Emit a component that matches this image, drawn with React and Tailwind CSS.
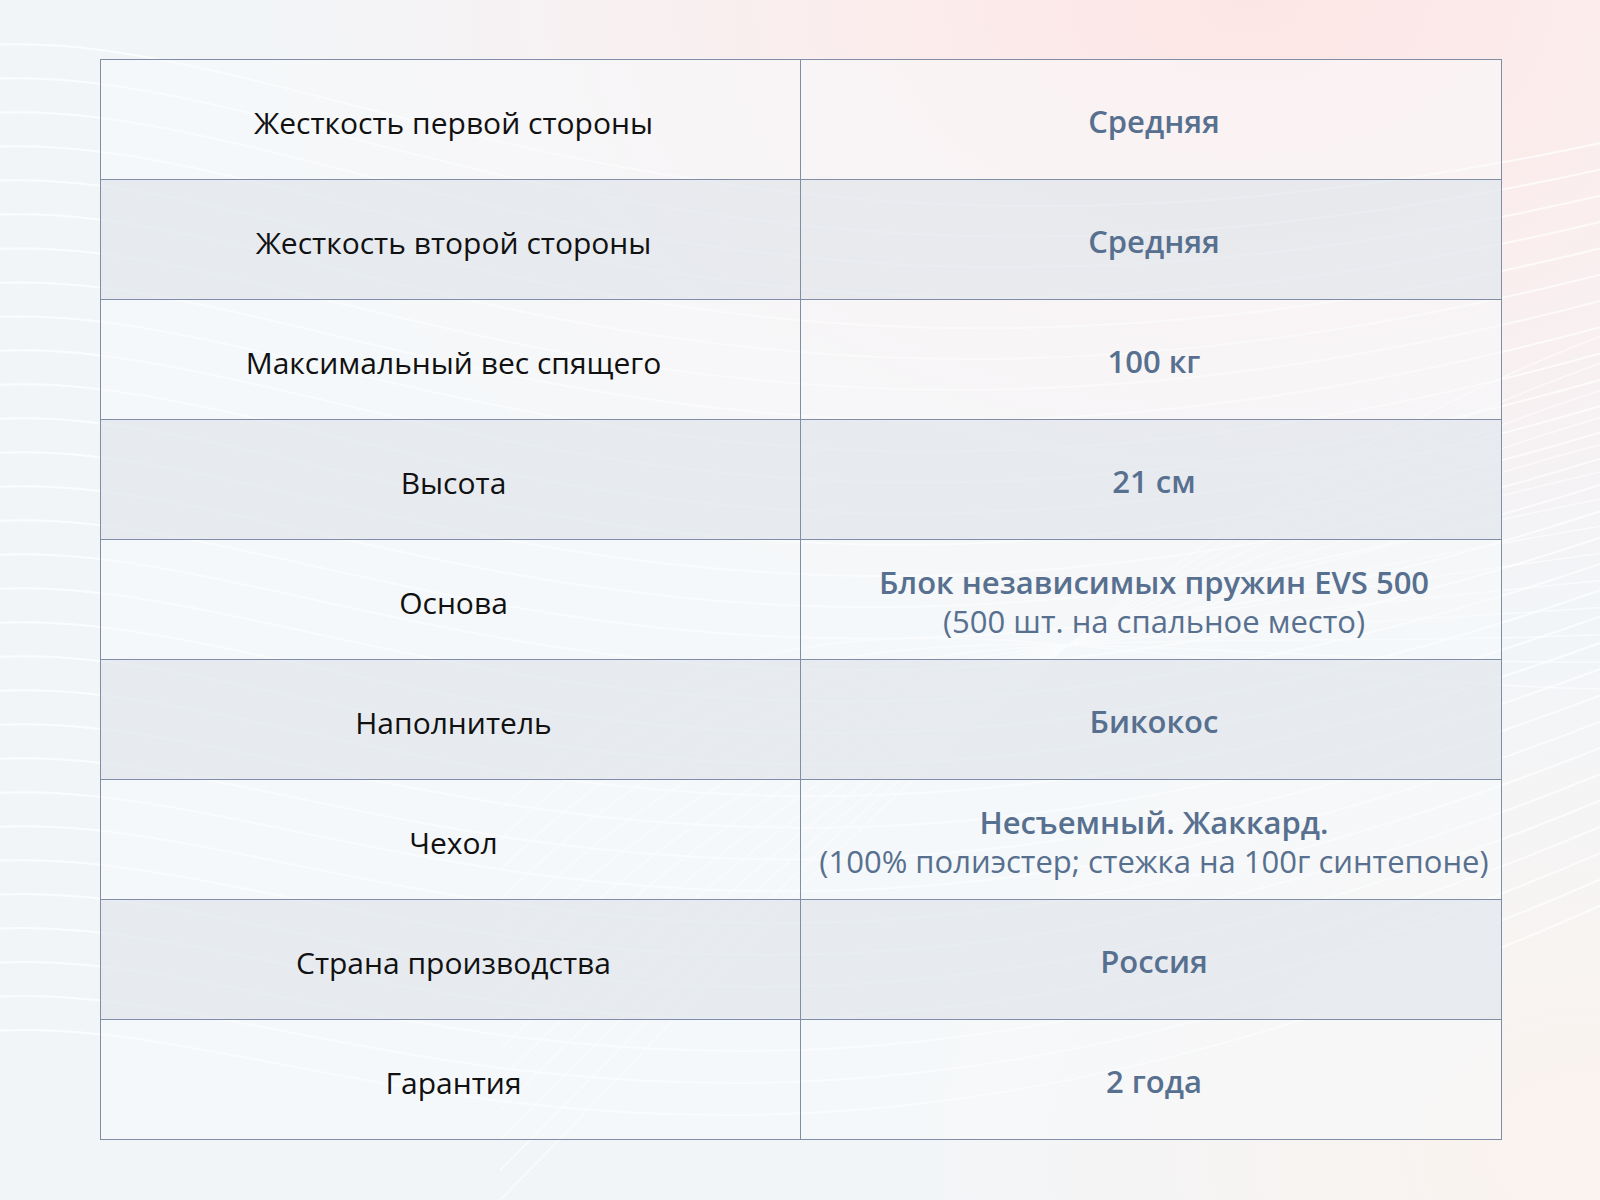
import React from "react";

const rows = [
  { label: "Жесткость первой стороны", value: "Средняя" },
  { label: "Жесткость второй стороны", value: "Средняя" },
  { label: "Максимальный вес спящего", value: "100 кг" },
  { label: "Высота", value: "21 см" },
  { label: "Основа", value: "Блок независимых пружин EVS 500", note: "(500 шт. на спальное место)" },
  { label: "Наполнитель", value: "Бикокос" },
  { label: "Чехол", value: "Несъемный. Жаккард.", note: "(100% полиэстер; стежка на 100г синтепоне)" },
  { label: "Страна производства", value: "Россия" },
  { label: "Гарантия", value: "2 года" },
];

function Waves() {
  // декоративные линии фона
  const lines = [];
  for (let i = 0; i < 30; i++) {
    const o = i * 34;
    lines.push(
      <path
        key={"a" + i}
        d={`M -100 ${60 + o} C 250 ${o - 40}, 650 ${380 + o}, 1700 ${120 + o * 0.75}`}
        fill="none"
        stroke="white"
        strokeWidth="2"
        strokeOpacity="0.7"
      />
    );
  }
  for (let i = 0; i < 14; i++) {
    const o = i * 30;
    lines.push(
      <path
        key={"b" + i}
        d={`M 500 ${1200 - o} C 800 ${900 - o}, 1100 ${500 + o * 0.5}, 1700 ${300 + o}`}
        fill="none"
        stroke="white"
        strokeWidth="1.5"
        strokeOpacity="0.6"
      />
    );
  }
  return (
    <svg className="absolute inset-0 h-full w-full" viewBox="0 0 1600 1200" preserveAspectRatio="none">
      {lines}
    </svg>
  );
}

export default function App() {
  return (
    <div
      className="relative h-[1200px] w-[1600px] overflow-hidden bg-[#f2f5f8]"
      style={{ fontFamily: "'Open Sans', 'Noto Sans', sans-serif" }}
    >
      <div className="absolute inset-0 bg-[radial-gradient(ellipse_1000px_650px_at_1250px_0px,#fde5e5_0%,#fbeded_40%,rgba(242,245,248,0)_100%)]" />
      <div className="absolute inset-0 bg-[radial-gradient(ellipse_700px_500px_at_1600px_1150px,#fbf3ee_0%,rgba(242,245,248,0)_100%)]" />
      <Waves />

      <div className="relative pl-[100px] pt-[59px]">
        <div className="w-[1402px] border-l border-t border-[#7f8ea6]">
          {rows.map((r, i) => (
            <div
              key={i}
              className={`flex h-[120px] ${i % 2 === 1 ? "bg-[#e3e8ee]/80" : "bg-[#f7f9fb]/55"}`}
            >
              <div className="flex w-[700px] items-center justify-center border-b border-r border-[#7f8ea6] pl-[6px] pt-[5px] text-[30px] text-[#111]">
                {r.label}
              </div>
              <div className="flex w-[701px] flex-col items-center justify-center border-b border-r border-[#7f8ea6] pl-[6px] pt-[4px] text-center text-[31px] leading-[39px] text-[#58708f]">
                <span className="font-semibold">{r.value}</span>
                {r.note && <span>{r.note}</span>}
              </div>
            </div>
          ))}
        </div>
      </div>
    </div>
  );
}
